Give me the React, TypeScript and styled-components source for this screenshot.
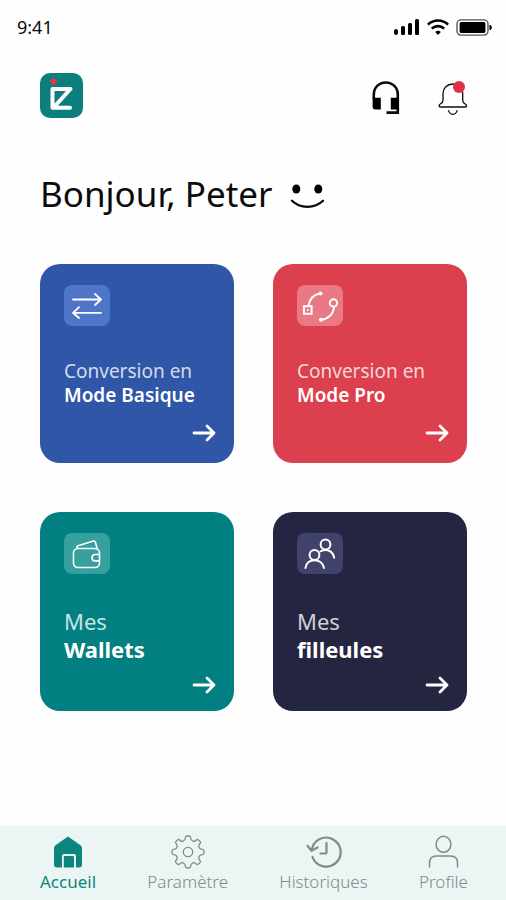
import React from "react";
import styled, { createGlobalStyle } from "styled-components";

const GlobalStyle = createGlobalStyle`
  * { box-sizing: border-box; }
  body {
    margin: 0;
    background: #fefefe;
    color: #0b0b0d;
    font-family: "Noto Sans", "Open Sans", sans-serif;
  }
  button { font: inherit; border: 0; padding: 0; background: none; cursor: pointer; }
  svg { display: block; flex: none; }
`;

const Page = styled.div`
  min-height: 100vh;
  display: flex;
  flex-direction: column;
`;

const StatusBar = styled.div`
  display: flex;
  align-items: center;
  justify-content: space-between;
  height: 54px;
  padding: 0 14px 0 17px;
`;

const Time = styled.span`
  font-size: 18px;
  line-height: 24px;
`;

const StatusIcons = styled.div`
  display: flex;
  align-items: center;
  gap: 7px;
`;

const Header = styled.header`
  display: flex;
  align-items: center;
  justify-content: space-between;
  padding: 19px 38px 0 40px;
`;

const Actions = styled.div`
  display: flex;
  align-items: center;
  gap: 38px;
  padding-top: 4px;
`;

const IconButton = styled.button`
  color: #0b0b0d;
`;

const Main = styled.main`
  flex: 1;
  padding: 54px 39px 40px 40px;
`;

const Greeting = styled.h1`
  display: flex;
  align-items: center;
  gap: 18px;
  margin: 0;
  font-size: 35px;
  font-weight: 400;
  line-height: 44px;
`;

const Cards = styled.div`
  display: grid;
  grid-template-columns: 1fr 1fr;
  gap: 49px 39px;
  margin-top: 48px;
`;

const Card = styled.button<{ $color: string; $large?: boolean }>`
  display: flex;
  flex-direction: column;
  align-items: flex-start;
  min-height: 199px;
  padding: 21px 18px ${(p) => (p.$large ? 16 : 20)}px 24px;
  border-radius: 20px;
  background: ${(p) => p.$color};
  color: #fff;
  text-align: left;
  font-size: ${(p) => (p.$large ? 22 : 19)}px;
  line-height: ${(p) => (p.$large ? 28 : 24)}px;
`;

const IconTile = styled.span<{ $color: string }>`
  display: flex;
  align-items: center;
  justify-content: center;
  width: 46px;
  height: 41px;
  border-radius: 8px;
  background: ${(p) => p.$color};
`;

const CardLabel = styled.span`
  display: flex;
  flex-direction: column;
  margin-top: 33px;
  white-space: nowrap;
`;

const Light = styled.span`
  font-weight: 400;
  opacity: 0.78;
`;

const Strong = styled.strong<{ $large?: boolean }>`
  font-weight: ${(p) => (p.$large ? 700 : 600)};
`;

const ArrowSlot = styled.span`
  margin-top: auto;
  align-self: flex-end;
`;

const TabBar = styled.nav`
  display: flex;
  justify-content: space-between;
  padding: 9px 38px 7px 40px;
  background: #ebf5f3;
`;

const Tab = styled.button<{ $active?: boolean }>`
  display: flex;
  flex-direction: column;
  align-items: center;
  gap: 2px;
  color: ${(p) => (p.$active ? "#0b8580" : "#7f8b89")};
  font-size: 17px;
  font-weight: ${(p) => (p.$active ? 400 : 300)};
  line-height: 22px;
`;

const Logo = () => (
  <svg width="43" height="45" viewBox="0 0 43 45" role="img" aria-label="iZ">
    <rect width="43" height="45" rx="10" fill="#0b7f7c" />
    <path d="M13.5 5.5l3 2.7-3 3.3-3-3.3z" fill="#e0394c" stroke="#e0394c" strokeWidth="1.6" strokeLinejoin="round" />
    <path
      d="M30.500 15.900H12.500v18.800H30M29.500 17L15 33"
      fill="none"
      stroke="#fff"
      strokeWidth="4"
      strokeLinecap="round"
      strokeLinejoin="round"
    />
  </svg>
);

const Signal = () => (
  <svg width="26" height="16" viewBox="0 0 26 16" aria-hidden="true">
    <rect x="0" y="10" width="4" height="6" rx="2" />
    <rect x="7" y="7" width="4" height="9" rx="1.5" />
    <rect x="14" y="4" width="4" height="12" rx="1.5" />
    <rect x="21" y="0" width="4" height="16" rx="1.5" />
  </svg>
);

const Wifi = () => (
  <svg width="22" height="16" viewBox="0 0 22 16" fill="none" stroke="#000" strokeWidth="2.6" aria-hidden="true">
    <path d="M.9 5.6a14.4 14.4 0 0 1 20.2 0M4.8 9.7a8.8 8.8 0 0 1 12.4 0" />
    <path d="M11 16l-2.8-2.9a4 4 0 0 1 5.6 0z" fill="#000" stroke="none" />
  </svg>
);

const Battery = () => (
  <svg width="36" height="17" viewBox="0 0 36 17" aria-hidden="true">
    <rect x="1" y=".9" width="31" height="15.2" rx="4" fill="none" stroke="#555" strokeWidth="1.4" />
    <rect x="3.6" y="3" width="25.8" height="11" rx="1.5" />
    <path d="M34 6v5a3 3 0 0 0 0-5z" stroke="#000" />
  </svg>
);

const Headset = () => (
  <svg width="28" height="34" viewBox="0 0 28 34" aria-hidden="true">
    <g fill="none" stroke="currentColor" strokeWidth="2.6">
      <path d="M1.8 18v-4.5C1.8 6.6 7 1.5 13.8 1.5s12 5.1 12 12V29" />
      <path d="M25.8 27v4.6H14.5" />
    </g>
    <path d="M.6 16.8h8.2v11.6H3a2.4 2.4 0 0 1-2.4-2.4zM18.8 16.8H27v11.6h-8.2z" />
  </svg>
);

const Bell = () => (
  <svg width="30" height="34" viewBox="0 0 30 34" aria-hidden="true">
    <g fill="none" stroke="currentColor" strokeWidth="1.3" strokeLinecap="round" strokeLinejoin="round">
      <path d="M5 19v-6.5C5 7 9 3 14.8 3s9.9 4 9.9 9.5V19c0 2 .8 3 2.3 3.8 2.4 1.2 1.700 3.200.2 3.200H2.600C.8 26 .4 24 2.600 22.800 4.200 21.900 5 21 5 19z" />
      <path d="M10.5 29.600c1.800 4.900 7 4.900 8.600 0" />
    </g>
    <circle cx="21" cy="6" r="6" fill="#e02f48" />
  </svg>
);

const Smile = () => (
  <svg width="35" height="32" viewBox="0 -6 35 32" aria-hidden="true">
    <ellipse cx="6.3" cy="5" rx="4" ry="4.6" />
    <ellipse cx="28.3" cy="5" rx="4" ry="4.6" />
    <path d="M2 16.800c7.800 8 22.800 8 31 0" fill="none" stroke="#0b0b0d" strokeWidth="2.3" strokeLinecap="round" />
  </svg>
);

const Arrow = () => (
  <svg width="24" height="20" viewBox="0 0 24 20" fill="none" stroke="#fff" strokeWidth="2.8" strokeLinecap="round" strokeLinejoin="round" aria-hidden="true">
    <path d="M2 10h20M15 3l7 7-7 7" />
  </svg>
);

const Exchange = () => (
  <svg width="32" height="29" viewBox="0 0 32 29" fill="none" stroke="#fff" strokeWidth="1.8" strokeLinecap="round" strokeLinejoin="round" aria-hidden="true">
    <path d="M2 8.500h28M24 3l6 5.500-6 5.500M30 21.800H2M8 16.200l-6 5.600L8 27" />
  </svg>
);

const Curve = () => (
  <svg width="38" height="34" viewBox="0 0 38 34" fill="none" stroke="#fff" strokeWidth="2" aria-hidden="true">
    <rect x="3" y="17.2" width="7.600" height="7.600" />
    <circle cx="6.800" cy="21" r="1" fill="#fff" stroke="none" />
    <path d="M7.500 17C8.500 10.500 12.500 5.500 19 4.500" />
    <circle cx="19.500" cy="4.500" r="2" fill="#fff" stroke="none" />
    <circle cx="32.500" cy="14" r="3.700" />
    <path d="M33 18c-.8 7.500-6 12.300-13 12.800" />
    <circle cx="20" cy="30.800" r="2" fill="#fff" stroke="none" />
  </svg>
);

const Wallet = () => (
  <svg width="30" height="30" viewBox="0 0 30 30" fill="none" stroke="#fff" strokeWidth="1.600" strokeLinejoin="round" aria-hidden="true">
    <rect x="1.500" y="9.500" width="26" height="19" rx="4.500" />
    <path d="M5 9.500V8q0-1 1-1.300L21.500 2q1.400-.3 1.800 1l1.900 6.500" />
    <path d="M27.500 15.500h-4.300a3.200 3.200 0 0 0 0 6.400h4.300" />
  </svg>
);

const People = () => (
  <svg width="34" height="34" viewBox="0 0 34 34" fill="none" stroke="#fff" strokeWidth="2" strokeLinecap="round" aria-hidden="true">
    <circle cx="22.500" cy="7.500" r="4.900" />
    <path d="M17.500 14.300c7-3.200 12.500.2 13.700 6.500" />
    <circle cx="11.500" cy="18" r="4.900" />
    <path d="M2.500 31c1.200-10.500 16.500-10.500 18.500 0" />
  </svg>
);

const Home = () => (
  <svg width="34" height="34" viewBox="0 0 34 34" aria-hidden="true">
    <path d="M17 1.500l12.500 8.800q1.500 1 1.500 2.700v16.500q0 3-3 3h-3V21q0-2-2-2H13q-2 0-2 2v11.500H6q-3 0-3-3V13q0-1.700 1.500-2.700z" fill="currentColor" />
    <path d="M12.800 32.500V22.200q0-1.200 1.200-1.200h7.800q1.200 0 1.200 1.200v10.300z" fill="currentColor" />
  </svg>
);

const Gear = () => (
  <svg width="34" height="34" viewBox="0 0 34 34" fill="none" stroke="currentColor" strokeWidth="1.300" strokeLinejoin="round" aria-hidden="true">
    {/* One scalloped quarter of the wheel, repeated around the hub */}
    {[0, 90, 180, 270].map((angle) => (
      <path
        key={angle}
        transform={`rotate(${angle} 17 17)`}
        d="M17 1H17.800Q19.400 1 19.600 2.800C20 6.200 23.200 7.400 25.400 5Q26.600 3.900 27.700 5.100L28.900 6.300Q30.100 7.400 29 8.600C26.600 10.800 27.800 14 31.200 14.400Q33 14.600 33 16.200V17"
      />
    ))}
    <circle cx="17" cy="17" r="4.700" />
  </svg>
);

const History = () => (
  <svg width="36" height="34" viewBox="0 0 36 34" fill="none" stroke="currentColor" strokeWidth="2.200" strokeLinecap="round" strokeLinejoin="round" aria-hidden="true">
    <path d="M5.800 15A14.500 14.500 0 1 1 6.500 22" />
    <path d="M1.500 10.800l4 5 6-3.300M20.500 8v9.500q0 1-1 1h-5" />
  </svg>
);

const Person = () => (
  <svg width="34" height="34" viewBox="0 0 34 34" fill="none" stroke="currentColor" strokeWidth="1.500" strokeLinecap="round" aria-hidden="true">
    <ellipse cx="17.500" cy="9.300" rx="7.400" ry="8" />
    <path d="M3.500 32v-4c0-4.500 2.500-7 7-7h14c4.500 0 7 2.500 7 7v4" />
  </svg>
);

const cards = [
  { top: "Conversion en", bottom: "Mode Basique", color: "#3056a8", tile: "#4f75c8", icon: <Exchange /> },
  { top: "Conversion en", bottom: "Mode Pro", color: "#dc404e", tile: "#e97984", icon: <Curve /> },
  { top: "Mes", bottom: "Wallets", color: "#027f80", tile: "#36a09f", icon: <Wallet />, large: true },
  { top: "Mes", bottom: "filleules", color: "#242540", tile: "#414269", icon: <People />, large: true },
];

const tabs = [
  { label: "Accueil", icon: <Home />, active: true },
  { label: "Paramètre", icon: <Gear /> },
  { label: "Historiques", icon: <History /> },
  { label: "Profile", icon: <Person /> },
];

export default function App() {
  return (
    <>
      <GlobalStyle />
      <Page>
        <StatusBar>
          <Time>9:41</Time>
          <StatusIcons>
            <Signal />
            <Wifi />
            <Battery />
          </StatusIcons>
        </StatusBar>
        <Header>
          <Logo />
          <Actions>
            <IconButton aria-label="Assistance">
              <Headset />
            </IconButton>
            <IconButton aria-label="Notifications">
              <Bell />
            </IconButton>
          </Actions>
        </Header>
        <Main>
          <Greeting>
            Bonjour, Peter <Smile />
          </Greeting>
          <Cards>
            {cards.map((c) => (
              <Card key={c.bottom} $color={c.color} $large={c.large}>
                <IconTile $color={c.tile}>{c.icon}</IconTile>
                <CardLabel>
                  <Light>{c.top}</Light>
                  <Strong $large={c.large}>{c.bottom}</Strong>
                </CardLabel>
                <ArrowSlot>
                  <Arrow />
                </ArrowSlot>
              </Card>
            ))}
          </Cards>
        </Main>
        <TabBar>
          {tabs.map((t) => (
            <Tab key={t.label} $active={t.active} aria-current={t.active ? "page" : undefined}>
              {t.icon}
              {t.label}
            </Tab>
          ))}
        </TabBar>
      </Page>
    </>
  );
}
